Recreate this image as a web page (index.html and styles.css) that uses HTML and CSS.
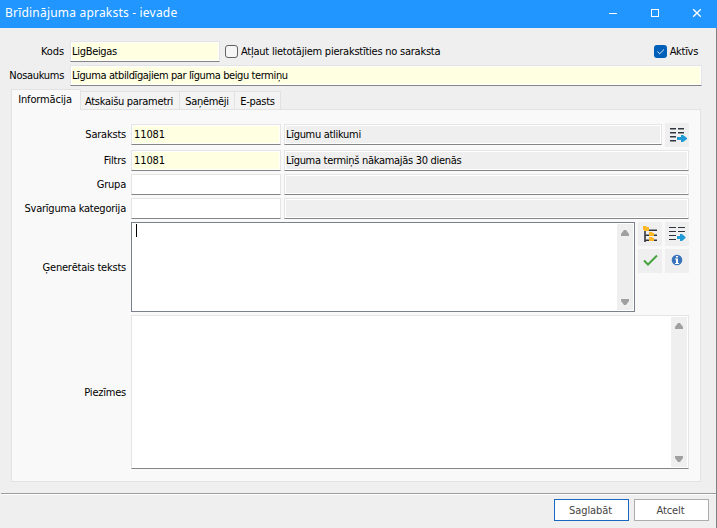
FILE: index.html
```html
<!DOCTYPE html>
<html lang="lv">
<head>
    <meta charset="UTF-8">
    <meta name="viewport" content="width=device-width, initial-scale=1.0">
    <title>Brīdinājuma apraksts - ievade</title>
    <link rel="stylesheet" href="styles.css">
</head>
<body>
    <div class="window">
        <div class="titlebar">
            <span class="title">Brīdinājuma apraksts - ievade</span>
            <svg class="controls" width="96" height="28" viewBox="0 0 96 28" fill="none" stroke="#fff">
                <path d="M4 13.500h8"/>
                <rect x="46.500" y="9.500" width="7" height="7"/>
                <path d="M88.200 9.200l7.600 7.600M95.800 9.200l-7.600 7.600" stroke-width="1.400"/>
            </svg>
        </div>

        <div class="content">
            <div class="row">
                <span class="label kods">Kods</span>
                <div class="field required code">LigBeigas</div>
                <span class="checkbox"></span>
                <span class="check-label allow">Atļaut lietotājiem pierakstīties no saraksta</span>
                <span class="checkbox checked">
                    <svg width="13" height="13" viewBox="0 0 13 13" fill="none" stroke="#dbeaf8"><path d="M3.500 6.500l2.200 2.300 4.300-4.300"/></svg>
                </span>
                <span class="check-label">Aktīvs</span>
            </div>
            <div class="row">
                <span class="label">Nosaukums</span>
                <div class="field required name">Līguma atbildīgajiem par līguma beigu termiņu</div>
            </div>

            <div class="tabs">
                <div class="tab active">Informācija</div>
                <div class="tab tab-params">Atskaišu parametri</div>
                <div class="tab tab-recipients">Saņēmēji</div>
                <div class="tab tab-mail">E-pasts</div>
            </div>

            <div class="panel">
                <div class="form-row row-list">
                    <span class="label">Saraksts</span>
                    <div class="field required key">11081</div>
                    <div class="field readonly">Līgumu atlikumi</div>
                    <div class="tool">
                        <svg width="24" height="24" viewBox="0 0 24 24">
                            <path d="M5 5.500h6M13 5.500h6M5 9.500h6M13 9.500h6M5 13.500h6M5 17.500h6" stroke="#30343c"/>
                            <path d="M5 6.500h6M13 6.500h6M5 10.500h6M13 10.500h6M5 14.500h6M5 18.500h6" stroke="#92959a"/>
                            <path d="M12 14h4v-2h2l4 3v1l-4 3h-2v-2h-4z" fill="#219bd6"/>
                        </svg>
                    </div>
                </div>
                <div class="form-row">
                    <span class="label">Filtrs</span>
                    <div class="field required key">11081</div>
                    <div class="field readonly">Līguma termiņš nākamajās 30 dienās</div>
                </div>
                <div class="form-row">
                    <span class="label">Grupa</span>
                    <div class="field key"></div>
                    <div class="field readonly"></div>
                </div>
                <div class="form-row">
                    <span class="label">Svarīguma kategorija</span>
                    <div class="field key"></div>
                    <div class="field readonly"></div>
                </div>
                <div class="form-row row-text">
                    <span class="label">Ģenerētais teksts</span>
                    <div class="area focused">
                        <span class="caret"></span>
                        <div class="scroll">
                            <svg width="8" height="6" viewBox="0 0 8 6"><path d="M3 0h2l3 4v2H0V4z" fill="#a0a0a0"/></svg>
                            <svg width="8" height="6" viewBox="0 0 8 6"><path d="M0 0h8v2L5 6H3L0 2z" fill="#a0a0a0"/></svg>
                        </div>
                    </div>
                    <div class="tools">
                        <div class="tool">
                            <svg width="24" height="24" viewBox="0 0 24 24">
                                <path d="M7 8v12" stroke="#30343c" stroke-width="1.600"/>
                                <path d="M11 8.500h8M7 13.500h12M7 18.500h12" stroke="#30343c"/>
                                <path d="M11 7.500h8M8 12.500h11M8 17.500h11" stroke="#92959a"/>
                                <path d="M5 4h3l1 1h2v4H6V8H5zM11 10h3l1 1h1v3h-5zM11 15h3l1 1h1v3h-5z" fill="#fdb827"/>
                            </svg>
                        </div>
                        <div class="tool">
                            <svg width="24" height="24" viewBox="0 0 24 24">
                                <path d="M4 5.500h7M13 5.500h7M4 9.500h7M13 9.500h7M4 13.500h7M4 17.500h7" stroke="#30343c"/>
                                <path d="M12 14h3v-2h2l3.500 3v1L17 19h-2v-2h-3z" fill="#219bd6"/>
                            </svg>
                        </div>
                        <div class="tool">
                            <svg width="24" height="24" viewBox="0 0 24 24"><path d="M6 11.500l4 4L19 6.500" fill="none" stroke="#46a340" stroke-width="2"/></svg>
                        </div>
                        <div class="tool">
                            <svg width="24" height="24" viewBox="0 0 24 24">
                                <circle cx="12" cy="11" r="5.300" fill="#3973b9"/>
                                <path d="M11 7h2v1.500h-2zM10 9.500h3V14h1v1h-4v-1h1v-3.500h-1z" fill="#fff"/>
                            </svg>
                        </div>
                    </div>
                </div>
                <div class="form-row row-notes">
                    <span class="label">Piezīmes</span>
                    <div class="area">
                        <div class="scroll">
                            <svg width="8" height="6" viewBox="0 0 8 6"><path d="M3 0h2l3 4v2H0V4z" fill="#a0a0a0"/></svg>
                            <svg width="8" height="6" viewBox="0 0 8 6"><path d="M0 0h8v2L5 6H3L0 2z" fill="#a0a0a0"/></svg>
                        </div>
                    </div>
                </div>
            </div>
        </div>

        <div class="footer">
            <div class="button primary">Saglabāt</div>
            <div class="button">Atcelt</div>
        </div>
    </div>
</body>
</html>
```
FILE: styles.css
```css
* {
    box-sizing: border-box;
}
body {
    margin: 0;
    font-family: "DejaVu Sans Condensed", "DejaVu Sans", sans-serif;
    font-stretch: condensed;
    font-size: 11px;
    letter-spacing: -0.3px;
    color: #000;
    white-space: nowrap;
}
.window {
    width: 717px;
    height: 528px;
    background: #efefef;
    display: flex;
    flex-direction: column;
}
.titlebar {
    height: 28px;
    flex: none;
    background: #2196ff;
    color: #fff;
    display: flex;
    justify-content: space-between;
    padding: 0 16px 0 5px;
}
.title {
    font-family: "Noto Sans", sans-serif;
    font-stretch: normal;
    font-size: 12px;
    line-height: 25px;
    letter-spacing: 0.2px;
}
.controls {
    display: block;
}
.content {
    height: 465px;
    flex: none;
    border-right: 1px solid #808080;
    padding: 13px 14px 0 0;
}
.row,
.form-row {
    display: flex;
    height: 24px;
}
.label {
    width: 64px;
    margin-right: 6px;
    line-height: 21px;
    text-align: right;
    flex: none;
}
.kods {
    letter-spacing: -0.1px;
}
.field {
    height: 21px;
    flex: 1;
    border: 1px solid #e5e5e5;
    border-bottom-color: #858585;
    box-shadow: inset 0 0 0 1px #fff;
    background: #fff;
    line-height: 19px;
    padding-left: 1px;
}
.required {
    background: #ffffe1;
}
.readonly {
    background: #efefef;
}
.name {
    letter-spacing: -0.39px;
}
.code {
    flex: none;
    width: 150px;
}
.checkbox {
    width: 13px;
    height: 13px;
    margin: 4px 3px 0 5px;
    flex: none;
    border: 1px solid #626262;
    border-radius: 3px;
    background: #f5f5f5;
}
.checked {
    margin-left: auto;
    background: #005fb8;
    border: none;
}
.checked svg {
    display: block;
}
.check-label {
    line-height: 22px;
}
.allow {
    letter-spacing: -0.24px;
}
.row .check-label:last-child {
    margin-right: 4px;
}
.tabs {
    display: flex;
    align-items: flex-end;
    height: 20px;
    margin-left: 11px;
    position: relative;
}
.tab {
    height: 18px;
    line-height: 19px;
    text-align: center;
    border: 1px solid #e2e2e2;
    border-width: 1px 1px 0 0;
    background: #f3f3f3;
}
.tab.active {
    width: 70px;
    height: 21px;
    margin-bottom: -1px;
    padding-right: 2px;
    border-left-width: 1px;
    background: #f9f9f9;
    letter-spacing: -0.15px;
}
.tab-params {
    width: 99px;
    padding-right: 2px;
}
.tab-recipients {
    width: 55px;
}
.tab-mail {
    width: 46px;
}
.panel {
    width: 690px;
    height: 373px;
    margin-left: 11px;
    padding: 14px 11px 0 0;
    border: 1px solid #e2e2e2;
    background: #f9f9f9;
}
.panel .label {
    width: 114px;
    margin-right: 5px;
    letter-spacing: -0.22px;
}
.row-list {
    height: 26px;
}
.panel .key {
    width: 150px;
    flex: none;
    margin-right: 3px;
}
.panel .key.required {
    letter-spacing: -0.1px;
    padding-left: 2px;
}
.tool {
    width: 24px;
    height: 24px;
    background: #efefef;
}
.tool svg {
    display: block;
}
.row-list .tool {
    margin: -1px 0 0 3px;
}
.row-text {
    height: 93px;
}
.row-text .label {
    line-height: 91px;
}
.area {
    flex: 1;
    display: flex;
    justify-content: space-between;
    background: #fff;
    border: 1px solid #e5e5e5;
    border-bottom-color: #858585;
    padding: 1px;
}
.focused {
    height: 90px;
    border-color: #7a808c;
}
.caret {
    width: 1px;
    height: 13px;
    margin-left: 3px;
    background: #000;
}
.scroll {
    width: 16px;
    background: #efefef;
    margin-left: auto;
    display: flex;
    flex-direction: column;
    justify-content: space-between;
    align-items: center;
    padding: 6px 0 5px;
}
.tools {
    display: grid;
    grid-template-columns: 24px 24px;
    grid-auto-rows: 24px;
    gap: 3px;
    margin-left: 3px;
}
.row-notes {
    height: 154px;
}
.row-notes .label {
    line-height: 155px;
}
.footer {
    flex: 1;
    display: flex;
    justify-content: flex-end;
    gap: 5px;
    padding: 4px 7px 0 0;
    margin-left: 1px;
    border-top: 1px solid #9b9b9b;
    border-right: 1px solid #808080;
    box-shadow: inset 0 1px 0 #fff;
}
.button {
    width: 75px;
    height: 22px;
    margin-top: 1px;
    padding-right: 2px;
    border: 1px solid #adadad;
    background: #fff;
    color: #444;
    line-height: 21px;
    text-align: center;
    letter-spacing: -0.1px;
}
.primary {
    border-color: #1a66c0;
}
```
